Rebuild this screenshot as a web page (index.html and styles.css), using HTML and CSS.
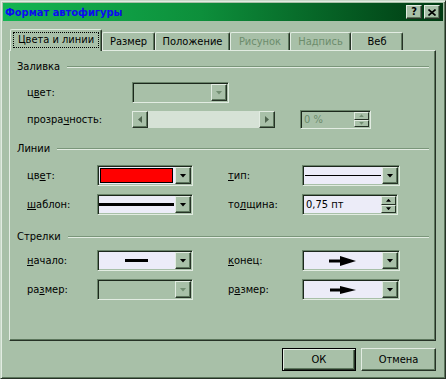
FILE: index.html
```html
<!DOCTYPE html>
<html lang="ru">
<head>
    <meta charset="UTF-8">
    <meta name="viewport" content="width=device-width, initial-scale=1.0">
    <title>Формат автофигуры</title>
    <link rel="stylesheet" href="styles.css">
</head>
<body>
<div class="win">
    <div class="titlebar">
        <span class="title">Формат автофигуры</span>
        <span class="tbtn">?</span>
        <span class="tbtn close">
            <svg width="8" height="7" viewBox="0 0 8 7"><path d="M0.5 0.5 L7.5 6.5 M7.5 0.5 L0.5 6.5" stroke="#000" stroke-width="1.6" fill="none"/></svg>
        </span>
    </div>

    <div class="tabs">
        <div class="tab active"><span class="focus">Цвета и линии</span></div>
        <div class="tab t-size">Размер</div>
        <div class="tab t-pos">Положение</div>
        <div class="tab t-pic off">Рисунок</div>
        <div class="tab t-cap off">Надпись</div>
        <div class="tab t-web">Веб</div>
    </div>

    <div class="panel">
        <!-- Заливка -->
        <div class="group g-fill">
            <div class="ghead"><span>Заливка</span><i></i></div>
            <div class="row r1">
                <label class="lbl wide">ц<u>в</u>ет:</label>
                <div class="combo off w97"><div class="field"></div><span class="drop"></span></div>
            </div>
            <div class="row r2">
                <label class="lbl wide">прозра<u>ч</u>ность:</label>
                <div class="scroll">
                    <span class="sbtn left"></span>
                    <span class="track"></span>
                    <span class="sbtn right"></span>
                </div>
                <div class="spin off pct">
                    <div class="field">0 %</div>
                    <div class="arrows"><span class="up"></span><span class="down"></span></div>
                </div>
            </div>
        </div>

        <!-- Линии -->
        <div class="group g-lines">
            <div class="ghead"><span>Линии</span><i></i></div>
            <div class="row r1">
                <label class="lbl">цв<u>е</u>т:</label>
                <div class="combo"><div class="field"><span class="swatch"></span></div><span class="drop"></span></div>
                <label class="lbl lbl2"><u>т</u>ип:</label>
                <div class="combo w98"><div class="field"><span class="thin"></span></div><span class="drop"></span></div>
            </div>
            <div class="row r2">
                <label class="lbl"><u>ш</u>аблон:</label>
                <div class="combo"><div class="field"><span class="thick"></span></div><span class="drop"></span></div>
                <label class="lbl lbl2">то<u>л</u>щина:</label>
                <div class="spin">
                    <div class="field">0,75 пт</div>
                    <div class="arrows"><span class="up"></span><span class="down"></span></div>
                </div>
            </div>
        </div>

        <!-- Стрелки -->
        <div class="group g-arrows">
            <div class="ghead"><span>Стрелки</span><i></i></div>
            <div class="row r1">
                <label class="lbl"><u>н</u>ачало:</label>
                <div class="combo"><div class="field center"><span class="stub"></span></div><span class="drop"></span></div>
                <label class="lbl lbl2"><u>к</u>онец:</label>
                <div class="combo w98"><div class="field center">
                    <svg width="27" height="10" viewBox="0 0 27 10"><rect x="0" y="3.5" width="12" height="3" fill="#000"/><path d="M11 0 L27 5 L11 10 Z" fill="#000"/></svg>
                </div><span class="drop"></span></div>
            </div>
            <div class="row r2">
                <label class="lbl">ра<u>з</u>мер:</label>
                <div class="combo off"><div class="field"></div><span class="drop"></span></div>
                <label class="lbl lbl2">р<u>а</u>змер:</label>
                <div class="combo w98"><div class="field center">
                    <svg width="26" height="8" viewBox="0 0 26 8"><rect x="0" y="2.5" width="12" height="3" fill="#000"/><path d="M10 0 L26 4 L10 8 Z" fill="#000"/></svg>
                </div><span class="drop"></span></div>
            </div>
        </div>
    </div>

    <div class="footer">
        <button class="btn default">ОК</button>
        <button class="btn">Отмена</button>
    </div>
</div>
</body>
</html>
```

FILE: styles.css
```css
* {
    box-sizing: border-box;
    margin: 0;
    padding: 0;
}

html, body {
    width: 446px;
    height: 379px;
    overflow: hidden;
}

body {
    background: #a8c0a8;
    font-family: "DejaVu Sans", Verdana, sans-serif;
    font-stretch: condensed;
    font-size: 11px;
    color: #000;
}

.win {
    width: 446px;
    height: 379px;
    border: 1px solid;
    border-color: #c8d8c8 #263226 #263226 #c8d8c8;
    box-shadow: inset 1px 1px #e2ece2, inset -1px -1px #5c765c;
    padding: 2px;
    display: flex;
    flex-direction: column;
}

/* title bar */
.titlebar {
    height: 18px;
    display: flex;
    align-items: center;
    padding: 0 3px 0 2px;
    background: linear-gradient(90deg, #13b552 0%, #0d8f3b 45%, #003a12 100%);
}

.title {
    flex: 1;
    color: #0c0cf0;
    font-weight: bold;
    font-size: 11px;
}

.tbtn {
    width: 16px;
    height: 14px;
    background: #a8c0a8;
    border: 1px solid;
    border-color: #e2ece2 #263226 #263226 #e2ece2;
    box-shadow: inset -1px -1px #5c765c;
    font-weight: bold;
    font-size: 11px;
    line-height: 12px;
    text-align: center;
    display: flex;
    align-items: center;
    justify-content: center;
}

.tbtn.close {
    margin-left: 2px;
}

/* tabs */
.tabs {
    margin-top: 8px;
    margin-left: 7px;
    height: 21px;
    display: flex;
    align-items: flex-end;
}

.tab {
    height: 18px;
    border: 1px solid;
    border-bottom: none;
    border-color: #e2ece2 #263226 #263226 #e2ece2;
    box-shadow: inset -1px 0 #5c765c;
    border-radius: 2px 2px 0 0;
    text-align: center;
    line-height: 16px;
    padding-top: 1px;
    background: #a8c0a8;
}

.tab.active {
    height: 22px;
    width: 92px;
    margin-bottom: -1px;
    position: relative;
    z-index: 1;
    padding-top: 3px;
    line-height: 14px;
}

.focus {
    display: inline-block;
    outline: 1px dotted #000;
    outline-offset: 0;
    padding: 0 4px;
    line-height: 14px;
}

.t-size { width: 53px; }
.t-pos { width: 75px; }
.t-pic { width: 60px; }
.t-cap { width: 61px; }
.t-web { width: 52px; }

.tab.off {
    color: #6c8c6c;
}

/* main panel */
.panel {
    margin-left: 6px;
    width: 427px;
    height: 291px;
    border: 1px solid;
    border-color: #e2ece2 #263226 #263226 #e2ece2;
    box-shadow: inset -1px -1px #5c765c;
    padding: 0 6px 0 7px;
}

.ghead {
    height: 13px;
    line-height: 13px;
    display: flex;
    align-items: center;
}

.ghead i {
    flex: 1;
    height: 2px;
    margin-left: 7px;
    border-top: 1px solid #7a967a;
    border-bottom: 1px solid #e2ece2;
}

.g-fill { margin-top: 9px; }
.g-fill .r1 { margin-top: 9px; height: 21px; }
.g-fill .r2 { margin-top: 7px; height: 19px; }

.g-lines { margin-top: 13px; }
.g-arrows { margin-top: 15px; }
.g-lines .r1 { margin-top: 10px; }
.g-arrows .r1 { margin-top: 7px; }
.g-lines .r2, .g-arrows .r2 { margin-top: 8px; }

.row {
    display: flex;
    align-items: center;
    height: 21px;
}

.lbl {
    margin-left: 10px;
    width: 70px;
    white-space: nowrap;
}

.lbl.wide { width: 105px; }

.lbl2 {
    margin-left: 35px;
    width: 74px;
}

/* combo boxes */
.combo {
    width: 96px;
    height: 21px;
    border: 1px solid;
    border-color: #6a846a #e2ece2 #e2ece2 #6a846a;
    box-shadow: inset 1px 1px #1c281c, inset -1px -1px #a8c0a8;
    padding: 1px;
    background: #ececf8;
    display: flex;
}

.combo.w97 { width: 97px; }
.combo.w98 { width: 98px; }

.combo.off { background: #a8c0a8; }

.field {
    flex: 1;
    display: flex;
    align-items: center;
    padding: 1px 2px 1px 1px;
}

.field.center { justify-content: center; }

.drop {
    width: 16px;
    height: 17px;
    background: #a8c0a8;
    border: 1px solid;
    border-color: #e2ece2 #263226 #263226 #e2ece2;
    box-shadow: inset -1px -1px #5c765c;
    display: flex;
    align-items: center;
    justify-content: center;
}

.drop::after {
    content: '';
    width: 7px;
    height: 4px;
    background: #000;
    clip-path: polygon(0 0, 100% 0, 50% 100%);
}

.off .drop::after {
    background: #728e72;
}

.swatch {
    flex: 1;
    align-self: stretch;
    background: #ff0000;
    border: 1px solid #000;
}

.thin {
    flex: 1;
    height: 1px;
    background: #000;
    margin-right: -1px;
}

.thick {
    flex: 1;
    height: 3px;
    background: #000;
    margin-left: -1px;
    margin-right: -1px;
}

.stub {
    width: 23px;
    height: 3px;
    background: #000;
}

/* scrollbar */
.scroll {
    width: 143px;
    height: 17px;
    display: flex;
}

.sbtn {
    width: 16px;
    height: 17px;
    background: #a8c0a8;
    border: 1px solid;
    border-color: #e2ece2 #263226 #263226 #e2ece2;
    box-shadow: inset -1px -1px #5c765c;
    display: flex;
    align-items: center;
    justify-content: center;
}

.sbtn::after {
    content: '';
    width: 4px;
    height: 7px;
    background: #4e644e;
}

.sbtn.left::after { clip-path: polygon(100% 0, 100% 100%, 0 50%); }
.sbtn.right::after { clip-path: polygon(0 0, 0 100%, 100% 50%); }

.track {
    flex: 1;
    background: #d6e2d6;
}

/* spin boxes */
.spin {
    width: 96px;
    height: 21px;
    border: 1px solid;
    border-color: #6a846a #e2ece2 #e2ece2 #6a846a;
    box-shadow: inset 1px 1px #1c281c, inset -1px -1px #a8c0a8;
    padding: 1px;
    background: #ececf8;
    display: flex;
}

.spin .field {
    padding-left: 2px;
}

.spin.pct {
    width: 71px;
    height: 19px;
    margin-left: 25px;
    background: #a8c0a8;
    color: #6c8c6c;
}

.arrows {
    width: 15px;
    display: flex;
    flex-direction: column;
}

.arrows span {
    flex: 1;
    background: #a8c0a8;
    border: 1px solid;
    border-color: #e2ece2 #263226 #263226 #e2ece2;
    display: flex;
    align-items: center;
    justify-content: center;
}

.arrows span::after {
    content: '';
    width: 5px;
    height: 3px;
    background: #000;
}

.arrows .up::after { clip-path: polygon(50% 0, 100% 100%, 0 100%); }
.arrows .down::after { clip-path: polygon(0 0, 100% 0, 50% 100%); }

.spin.off .arrows span::after { background: #728e72; }

/* footer buttons */
.footer {
    margin-top: 7px;
    padding-right: 7px;
    display: flex;
    justify-content: flex-end;
    gap: 5px;
}

.btn {
    width: 75px;
    height: 23px;
    font-family: inherit;
    font-stretch: condensed;
    font-size: 11px;
    color: #000;
    background: #a8c0a8;
    border: 1px solid;
    border-color: #e2ece2 #263226 #263226 #e2ece2;
    box-shadow: inset -1px -1px #5c765c;
}

.btn.default {
    width: 74px;
    border-color: #000;
    box-shadow: inset 1px 1px #e2ece2, inset -1px -1px #263226, inset -2px -2px #5c765c;
}
```
